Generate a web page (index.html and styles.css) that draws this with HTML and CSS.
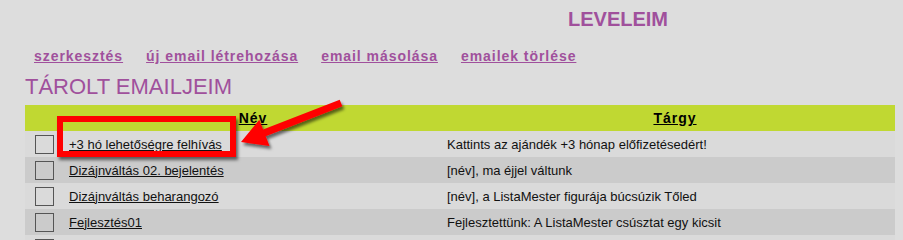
FILE: index.html
```html
<!DOCTYPE html>
<html lang="hu">
<head>
<meta charset="utf-8">
<title>Leveleim</title>
<link rel="stylesheet" href="styles.css">
</head>
<body>
<div class="page">
  <h1 class="title">LEVELEIM</h1>
  <nav class="menu">
    <a href="#">szerkesztés</a>
    <a href="#">új email létrehozása</a>
    <a href="#">email másolása</a>
    <a href="#">emailek törlése</a>
  </nav>
  <h2 class="subtitle">TÁROLT EMAILJEIM</h2>
  <table class="mails">
    <thead>
      <tr>
        <th class="c-check"></th>
        <th class="c-name"><a href="#">Név</a></th>
        <th class="c-subj"><a href="#">Tárgy</a></th>
      </tr>
    </thead>
    <tbody>
      <tr>
        <td class="c-check"><span class="box"></span></td>
        <td class="c-name"><a href="#">+3 hó lehetőségre felhívás</a></td>
        <td class="c-subj">Kattints az ajándék +3 hónap előfizetésedért!</td>
      </tr>
      <tr>
        <td class="c-check"><span class="box"></span></td>
        <td class="c-name"><a href="#">Dizájnváltás 02. bejelentés</a></td>
        <td class="c-subj">[név], ma éjjel váltunk</td>
      </tr>
      <tr>
        <td class="c-check"><span class="box"></span></td>
        <td class="c-name"><a href="#">Dizájnváltás beharangozó</a></td>
        <td class="c-subj">[név], a ListaMester figurája búcsúzik Tőled</td>
      </tr>
      <tr>
        <td class="c-check"><span class="box"></span></td>
        <td class="c-name"><a href="#">Fejlesztés01</a></td>
        <td class="c-subj">Fejlesztettünk: A ListaMester csúsztat egy kicsit</td>
      </tr>
      <tr>
        <td class="c-check"><span class="box"></span></td>
        <td class="c-name"></td>
        <td class="c-subj"></td>
      </tr>
    </tbody>
  </table>
</div>
<div class="highlight"></div>
<svg class="arrow" width="903" height="239" viewBox="0 0 903 239" aria-hidden="true">
  <defs>
    <filter id="sh" x="-20%" y="-20%" width="140%" height="160%">
      <feDropShadow dx="2" dy="3" stdDeviation="1.6" flood-color="#000" flood-opacity="0.55"/>
    </filter>
  </defs>
  <polygon filter="url(#sh)" fill="#ff0000" points="241,142 259.3,119.8 263.1,129.6 339.7,99.7 342.3,106.3 265.7,136.2 269.5,146"/>
</svg>
</body>
</html>
```
FILE: styles.css
```css
html, body {
  overflow: hidden;
}
body {
  margin: 8px;
  background: #dddddd;
  font-family: "Liberation Sans", Arial, sans-serif;
  color: #111;
}
.page {
  padding-left: 17px;
}
.title {
  margin: 0;
  padding-left: 543px;
  font-size: 20px;
  line-height: 23px;
  font-weight: bold;
  color: #a0509c;
}
.menu {
  display: flex;
  gap: 23px;
  margin-top: 17px;
  padding-left: 9px;
  line-height: 16px;
}
.menu a {
  font-size: 14px;
  font-weight: bold;
  letter-spacing: 0.95px;
  color: #a0509c;
  text-decoration: underline;
}
.subtitle {
  margin: 10px 0 0;
  font-size: 22px;
  line-height: 25px;
  font-weight: normal;
  color: #a0509c;
}
.mails {
  margin-top: 6px;
  width: 883px;
  border-collapse: collapse;
  table-layout: fixed;
}
.mails th, .mails td {
  height: 26px;
  padding: 0;
  vertical-align: middle;
}
.mails thead tr {
  background: #c0d832;
}
.mails th a {
  font-size: 14px;
  font-weight: bold;
  letter-spacing: 1px;
  color: #000;
  text-decoration: underline;
}
.mails th {
  text-align: center;
}
.c-check {
  width: 39px;
}
.c-name {
  width: 378px;
}
.mails td.c-name {
  padding-left: 5px;
}
.mails td.c-subj {
  padding-left: 5px;
}
.mails td {
  font-size: 13px;
}
.mails td a {
  color: #111;
  text-decoration: underline;
}
.mails tbody tr:nth-child(odd) {
  background: #dadada;
}
.mails tbody tr:nth-child(even) {
  background: #cbcbcb;
}
.box {
  display: block;
  width: 17px;
  height: 17px;
  margin-left: 10px;
  border: 1px solid #555;
}
.highlight {
  position: absolute;
  left: 57px;
  top: 116px;
  width: 179px;
  height: 41px;
  box-sizing: border-box;
  border: 6px solid #ff0000;
  box-shadow: 2px 3px 3px rgba(0, 0, 0, 0.55);
}
.arrow {
  position: absolute;
  left: 0;
  top: 0;
  pointer-events: none;
}
```
